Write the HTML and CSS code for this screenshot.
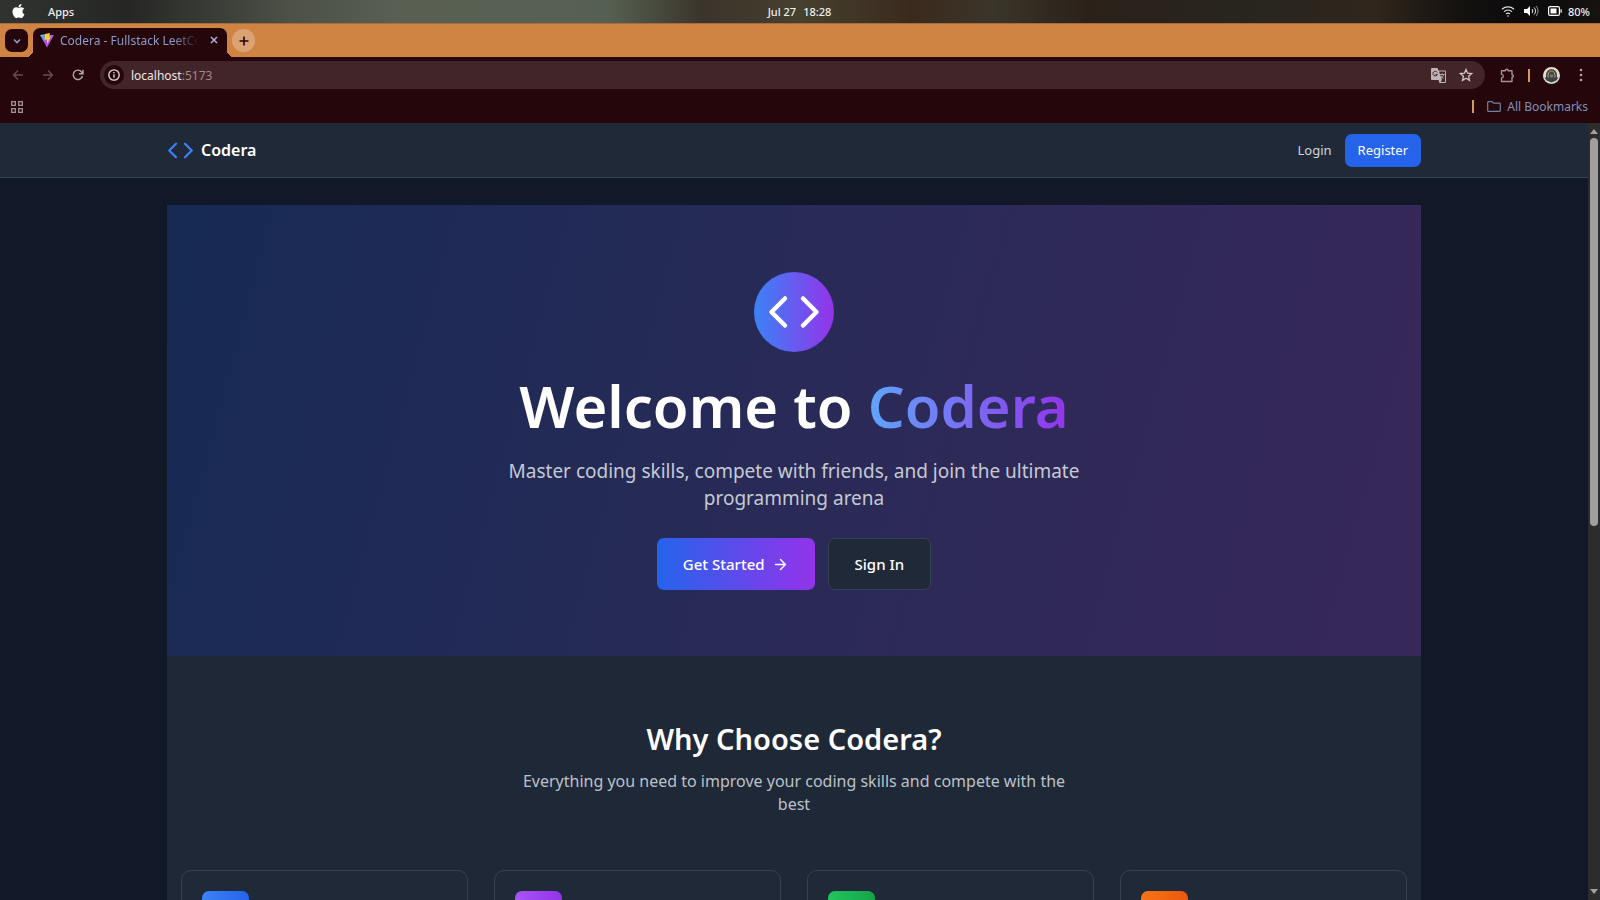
FILE: index.html
```html
<!DOCTYPE html>
<html lang="en">
<head>
<meta charset="utf-8">
<title>Codera - Fullstack LeetCode</title>
<link rel="stylesheet" href="styles.css">
</head>
<body>
<div class="system-bar">
  <div class="system-left">
    <svg class="apple" viewBox="0 0 24 24" fill="#fff"><path d="M17.05 20.28c-.98.95-2.05.8-3.08.35-1.09-.46-2.09-.48-3.24 0-1.44.62-2.2.44-3.06-.35C2.79 15.25 3.51 7.59 9.05 7.31c1.35.07 2.29.74 3.08.8 1.18-.24 2.31-.93 3.57-.84 1.51.12 2.65.72 3.4 1.8-3.12 1.87-2.38 5.98.48 7.13-.57 1.5-1.31 2.99-2.54 4.09zM12.03 7.25c-.15-2.23 1.66-4.07 3.74-4.25.29 2.58-2.34 4.5-3.74 4.25z"/></svg>
    <span>Apps</span>
  </div>
  <div class="clock"><span>Jul 27</span><span>18:28</span></div>
  <div class="system-right">
    <svg width="14" height="14" viewBox="0 0 14 14" fill="none" stroke="#ddd" stroke-width="1.2"><path d="M1 5.2c3.4-3 8.600-3 12 0M3 7.600c2.300-2 5.700-2 8 0M5 9.900c1.200-1 2.800-1 4 0"/><circle cx="7" cy="12" r=".8" fill="#ddd" stroke="none"/></svg>
    <svg width="15" height="14" viewBox="0 0 15 14" fill="none" stroke="#eee"><path d="M0 5h3l3-3v10L3 9H0z" fill="#fff" stroke="none"/><path d="M8 5c1 1 1 3 0 4M10 3.500c2 2 2 5 0 7" /><path d="M12 2c2.600 3 2.600 7 0 10" stroke="#999"/></svg>
    <span class="battery"><svg width="14" height="12" viewBox="0 0 14 12"><rect x=".6" y="1.600" width="10.800" height="8.800" rx="1.500" fill="none" stroke="#fff" stroke-width="1.200"/><path d="M2.500 3.500h6v5h-6zM12.500 4.300h1.200v3.500h-1.200z" fill="#fff"/></svg>80%</span>
  </div>
</div>

<div class="tab-strip">
  <button class="tab-search" aria-label="Search tabs"><svg width="10" height="10" viewBox="0 0 10 10" fill="none" stroke="#8c9cc8" stroke-width="1.600"><path d="M2 3.500l3 3 3-3"/></svg></button>
  <div class="tab">
    <svg width="14" height="15" viewBox="0 0 14 15">
      <defs><linearGradient id="vite" x1="0" y1="0" x2=".7" y2="1"><stop stop-color="#41d1ff"/><stop offset=".6" stop-color="#a64fe8"/><stop offset="1" stop-color="#d34ff0"/></linearGradient></defs>
      <path d="M0 2l5-.7L7 2l7 0L7 14.500z" fill="url(#vite)"/><path d="M5 1l5-1-1 4 2-.3L7 11V6.500L4.600 7z" fill="#ffd028"/>
    </svg>
    <span class="tab-title">Codera - Fullstack LeetCode</span>
    <button class="tab-close" aria-label="Close tab"><svg width="8" height="8" viewBox="0 0 8 8" stroke="#a9b3d8" stroke-width="1.500"><path d="M1 1l6 6M7 1L1 7"/></svg></button>
  </div>
  <button class="tab-new" aria-label="New tab"><svg width="10" height="10" viewBox="0 0 10 10" stroke="#25060b" stroke-width="1.600"><path d="M5 .5v9M.5 5h9"/></svg></button>
</div>

<div class="toolbar">
  <button class="tool" aria-label="Back"><svg width="12" height="12" viewBox="0 0 12 12" fill="none" stroke="#674f53" stroke-width="1.300"><path d="M11 6H1.500M6 1.500L1.500 6 6 10.500"/></svg></button>
  <button class="tool" aria-label="Forward"><svg width="12" height="12" viewBox="0 0 12 12" fill="none" stroke="#674f53" stroke-width="1.300"><path d="M1 6h9.500M6 1.500L10.500 6 6 10.500"/></svg></button>
  <button class="tool" aria-label="Reload"><svg width="12" height="12" viewBox="0 0 12 12" fill="none" stroke="#b5a6a9" stroke-width="1.400"><path d="M10.500 7A4.700 4.700 0 1 1 9.700 3L11 4.500M11 .7v4H7"/></svg></button>
  <div class="address">
    <span class="site-info"><svg width="12" height="12" viewBox="0 0 12 12" fill="none" stroke="#e9dfe0" stroke-width="1.300"><circle cx="6" cy="6" r="5.200"/><path d="M6 5.300v3.500M6 3v1.300"/></svg></span>
    <span class="url"><b>localhost</b>:5173</span>
    <button class="tool" aria-label="Translate"><svg width="15" height="15" viewBox="0 0 15 15"><path d="M1 0h5.500l1 2.500H14a1 1 0 0 1 1 1V14a1 1 0 0 1-1 1H8.500L7.500 12H1a1 1 0 0 1-1-1V1a1 1 0 0 1 1-1z" fill="#beb4b6"/><path d="M8 3.500h6V14H9.500l1.500-2z" fill="#412529"/><path d="M6.200 4.400a2.300 2.300 0 1 0 .2 2H4.500" fill="none" stroke="#412529"/><path d="M9 6.500h4.500M11.200 5.300v1.200M12.700 6.500c-.5 2-1.700 3-2.500 3.600M10 8c.6 1 1.600 1.900 2.600 2.500" fill="none" stroke="#beb4b6" stroke-width=".9"/></svg></button>
    <button class="tool" aria-label="Bookmark"><svg width="14" height="14" viewBox="0 0 14 14" fill="none" stroke="#d0c6c8" stroke-width="1.300"><path d="M7 1.500l1.600 3.700 4 .4-3 2.700.9 4L7 10.200l-3.500 2.100.9-4-3-2.700 4-.4z"/></svg></button>
  </div>
  <button class="tool extensions" aria-label="Extensions"><svg width="15" height="15" viewBox="0 0 15 15" fill="none" stroke="#a39296" stroke-width="1.400" stroke-linejoin="round"><path d="M1.500 2.700H5.300V2q1.400-1.300 2.800 0v.7H12V6.700h.7q1.300 1.300 0 2.600H12V13.500H1.500V10c2.400-.3 2.400-3.300 0-3.600z"/></svg></button>
  <span class="divider"></span>
  <button class="tool" aria-label="Profile"><svg width="17" height="17" viewBox="0 0 17 17"><circle cx="8.500" cy="8.500" r="8.500" fill="#e5ddd3"/><path d="M3 11V8a5.500 6 0 0 1 11 0v3z" fill="#46453c"/><path d="M5 11c0-7 2-7 3.500-7S12 4 12 11" fill="none" stroke="#b4a58a"/><path d="M7 11V7.500h3V11z" fill="#80765e"/><path d="M1.500 10.500h14l-2 3-5 2-5-2z" fill="#34424a"/></svg></button>
  <button class="tool" aria-label="Menu"><svg width="4" height="14" viewBox="0 0 4 14" fill="#b5a6a9"><circle cx="2" cy="2" r="1.300"/><circle cx="2" cy="7" r="1.300"/><circle cx="2" cy="12" r="1.300"/></svg></button>
</div>

<div class="bookmarks">
  <button class="tool" aria-label="Apps"><svg width="12" height="12" viewBox="0 0 12 12" fill="none" stroke="#a59599" stroke-width="1.300"><path d="M.7.7h3.600v3.600H.7zM7.700.7h3.600v3.600H7.700zM.7 7.700h3.600v3.600H.7zM7.700 7.700h3.600v3.600H7.700z"/></svg></button>
  <span class="divider"></span>
  <button class="all-bookmarks"><svg width="14" height="11" viewBox="0 0 14 11" fill="none" stroke="#7180a8" stroke-width="1.200"><path d="M.7 1.500q0-.8.8-.8h3.500l1.500 1.500h6q.8 0 .8.8v6.500q0 .8-.8.8h-11q-.8 0-.8-.8z"/></svg>All Bookmarks</button>
</div>

<div class="viewport">
  <div class="page">
    <header class="site-header">
      <nav class="container nav">
        <a class="brand" href="#"><svg width="27" height="27" viewBox="0 0 24 24" fill="none" stroke="#3b82f6" stroke-width="2" stroke-linecap="round" stroke-linejoin="round"><path d="M16 18l6-6-6-6M8 6l-6 6 6 6"/></svg>Codera</a>
        <a class="login" href="#">Login</a>
        <a class="register" href="#">Register</a>
      </nav>
    </header>
    <main class="container">
      <section class="hero">
        <div class="hero-icon"><svg width="54" height="54" viewBox="0 0 24 24" fill="none" stroke="#fff" stroke-width="2" stroke-linecap="round" stroke-linejoin="round"><path d="M16 18l6-6-6-6M8 6l-6 6 6 6"/></svg></div>
        <h1>Welcome to <span>Codera</span></h1>
        <p>Master coding skills, compete with friends, and join the ultimate<br>programming arena</p>
        <div class="actions">
          <a class="btn primary" href="#">Get Started <svg width="17" height="17" viewBox="0 0 24 24" fill="none" stroke="#fff" stroke-width="2" stroke-linecap="round" stroke-linejoin="round"><path d="M5 12h14M12 5l7 7-7 7"/></svg></a>
          <a class="btn secondary" href="#">Sign In</a>
        </div>
      </section>
      <section class="features">
        <h2>Why Choose Codera?</h2>
        <p>Everything you need to improve your coding skills and compete with the<br>best</p>
        <div class="cards">
          <article class="card"><div class="badge blue"></div></article>
          <article class="card"><div class="badge purple"></div></article>
          <article class="card"><div class="badge green"></div></article>
          <article class="card"><div class="badge orange"></div></article>
        </div>
      </section>
    </main>
  </div>
  <div class="scrollbar">
    <svg width="8" height="5" viewBox="0 0 8 5" fill="#a0a0a0"><path d="M0 5l4-5 4 5z"/></svg>
    <div class="track"><div class="thumb"></div></div>
    <svg width="8" height="5" viewBox="0 0 8 5" fill="#a0a0a0"><path d="M0 0l4 5 4-5z"/></svg>
  </div>
</div>
</body>
</html>
```
FILE: styles.css
```css
* { box-sizing: border-box; }
body {
  margin: 0;
  height: 100vh;
  display: flex;
  flex-direction: column;
  overflow: hidden;
  background: #111827;
  font-family: "Noto Sans", "Open Sans", sans-serif;
}
button { padding: 0; border: 0; background: none; font: inherit; color: inherit; }
a { color: inherit; text-decoration: none; }
svg { flex: none; display: block; }
h1, h2, p { margin: 0; }

.system-bar {
  flex: none;
  height: 23px;
  display: grid;
  grid-template-columns: 1fr auto 1fr;
  align-items: center;
  padding: 0 10px 1px 9px;
  color: #eee;
  font-size: 11px;
  font-weight: 500;
  background: linear-gradient(90deg, #30332f 0%, #262725 8%, #4c5046 18%, #596053 25%, #566052 38%, #3a342b 44%, #46402f 50%, #3a2a1d 57%, #3a3529 62%, #2b2119 68%, #28251f 78%, #30261c 86%, #15120f 91%, #0b0b0c 95%, #15120f 100%);
}
.system-left, .system-right, .battery { display: flex; align-items: center; }
.system-left { gap: 20px; }
.system-right { gap: 9px; justify-content: flex-end; }
.battery { gap: 6px; }
.apple { width: 19px; height: 22px; }
.clock { display: flex; gap: 7px; }

.tab-strip {
  flex: none;
  height: 34px;
  display: flex;
  align-items: center;
  padding-left: 5px;
  background: #d08443;
  border-top: 1px solid #a56c3d;
}
.tab-search, .tab-new { width: 23px; height: 23px; display: grid; place-items: center; }
.tab-search { border-radius: 7px; background: #25060b; }
.tab-new { margin-left: 5px; border-radius: 50%; background: #dba273; }
.tab {
  position: relative;
  align-self: flex-end;
  width: 194px;
  height: 29px;
  margin-left: 5px;
  padding: 0 9px 5px 7px;
  display: flex;
  align-items: center;
  gap: 6px;
  border-radius: 7px 7px 0 0;
  background: #25060b;
}
.tab::before, .tab::after {
  content: "";
  position: absolute;
  bottom: 0;
  width: 7px;
  height: 7px;
}
.tab::before { right: 100%; background: radial-gradient(circle at 0 0, transparent 7px, #25060b 7px); }
.tab::after { left: 100%; background: radial-gradient(circle at 100% 0, transparent 7px, #25060b 7px); }
.tab-title {
  flex: 1;
  overflow: hidden;
  white-space: nowrap;
  color: #8c9cc8;
  font-size: 12px;
  -webkit-mask-image: linear-gradient(90deg, #000 82%, transparent);
  mask-image: linear-gradient(90deg, #000 82%, transparent);
}
.tab-close { margin-left: 5px; }

.toolbar {
  flex: none;
  height: 38px;
  display: flex;
  align-items: center;
  padding: 0 4px 2px 3px;
  background: #25060b;
}
.tool { width: 30px; display: grid; place-items: center; }
.address {
  flex: 1;
  height: 28px;
  margin-left: 7px;
  padding: 0 6px 0 4px;
  display: flex;
  align-items: center;
  border-radius: 14px;
  background: #412529;
}
.site-info { width: 20px; height: 20px; display: grid; place-items: center; border-radius: 50%; background: #25060b; }
.url { flex: 1; margin-left: 7px; font-size: 12px; color: #a1888c; }
.url b { font-weight: 400; color: #efe6e7; }
.address .tool { width: 27px; }
.extensions { margin-left: 7px; }
.divider { width: 2px; height: 13px; background: #d89a5c; }
.toolbar .divider { margin: 0 6px; }
.bookmarks {
  flex: none;
  height: 28px;
  display: flex;
  align-items: center;
  padding: 0 12px 5px 2px;
  background: #25060b;
}
.bookmarks .divider { margin-left: auto; margin-right: 13px; }
.all-bookmarks { display: flex; align-items: center; gap: 6px; color: #8290ba; font-size: 12px; }

.viewport { flex: 1; min-height: 0; display: flex; }
.page { flex: 1; overflow: hidden; }
.container { width: calc(100% - 26px); max-width: 1254px; margin: 0 auto; }
.site-header { background: #1f2937; border-bottom: 1px solid #374151; }
.nav { height: 54px; display: flex; align-items: center; font-size: 13px; color: #d1d5db; }
.brand { margin-right: auto; display: flex; align-items: center; gap: 7px; color: #fff; font-size: 16px; font-weight: 600; }
.register { margin-left: 13px; padding: 7px 13px; line-height: 19px; border-radius: 7px; background: #2563eb; color: #fff; }

main { padding-top: 27px; }
.hero {
  padding: 67px 14px 66px;
  display: flex;
  flex-direction: column;
  align-items: center;
  text-align: center;
  background: linear-gradient(105deg, #162a54, #292a57 50%, #38285a);
}
.hero-icon { width: 80px; height: 80px; display: grid; place-items: center; border-radius: 50%; background: linear-gradient(90deg, #3b82f6, #9333ea); }
h1 { margin-top: 24px; font-size: 58px; line-height: 60px; font-weight: 600; color: #fff; }
h1 span { display: inline-block; background: linear-gradient(90deg, #60a5fa, #9333ea); -webkit-background-clip: text; background-clip: text; color: transparent; }
.hero p { margin-top: 22px; font-size: 19px; line-height: 27px; color: #c5c9d4; }
.actions { margin-top: 26px; display: flex; gap: 13px; }
.btn { height: 52px; padding: 0 26px; display: flex; align-items: center; gap: 7px; border-radius: 7px; color: #fff; font-size: 15px; font-weight: 500; }
.primary { background: linear-gradient(90deg, #2563eb, #9333ea); }
.secondary { background: #1f2937; border: 1px solid #374151; }

.features { padding: 65px 14px; text-align: center; background: #1e2836; }
h2 { font-size: 29px; line-height: 36px; font-weight: 600; color: #fff; }
.features p { margin-top: 13px; font-size: 16px; line-height: 23px; color: #bcc1c9; }
.cards { margin-top: 54px; display: grid; grid-template-columns: repeat(4, 1fr); gap: 26px; }
.card { height: 200px; padding: 20px; border: 1px solid #374151; border-radius: 10px; background: #1f2937; }
.badge { width: 47px; height: 47px; border-radius: 7px; }
.blue { background: linear-gradient(90deg, #3b82f6, #2563eb); }
.purple { background: linear-gradient(90deg, #a855f7, #9333ea); }
.green { background: linear-gradient(90deg, #22c55e, #16a34a); }
.orange { background: linear-gradient(90deg, #f97316, #ea580c); }

.scrollbar { width: 12px; padding: 6px 0; display: flex; flex-direction: column; align-items: center; gap: 4px; background: #2c2c2c; }
.track { flex: 1; width: 8px; }
.thumb { height: 52%; border-radius: 4px; background: #9f9f9f; }
```
